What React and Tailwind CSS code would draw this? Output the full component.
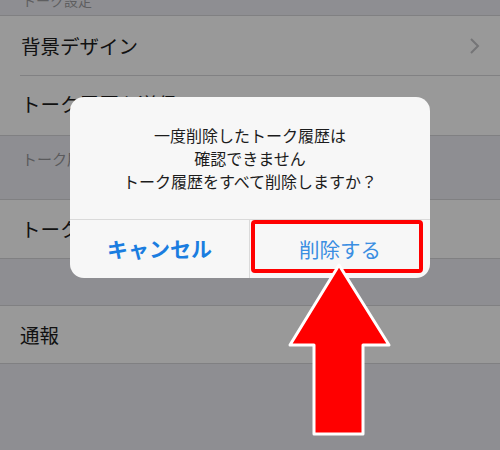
export default function App() {
  const font = { fontFamily: '"Noto Sans CJK JP", "Noto Sans", sans-serif' };
  return (
    <div className="relative w-[500px] h-[450px] overflow-hidden bg-[#8e8e92] text-[#111]" style={font}>
      {/* settings list (dimmed) */}
      <div className="flex flex-col">
        <div className="h-[15px] overflow-hidden px-[22px]">
          <div className="text-[14px] leading-[14px] -mt-[7px] text-[#5e5e60]">トーク設定</div>
        </div>
        <div className="bg-[#999999] border-t border-b border-[#808082]">
          <div className="h-[59px] flex items-center pl-[21px] pr-[20px] justify-between">
            <span className="text-[19.5px]">背景デザイン</span>
            <svg width="11" height="18" viewBox="0 0 11 18">
              <path d="M2 2 L9 9 L2 16" fill="none" stroke="#757577" strokeWidth="2" />
            </svg>
          </div>
          <div className="ml-[20px] h-px bg-[#818183]" />
          <div className="h-[59px] flex items-center pl-[21px] pb-[3px]">
            <span className="text-[19.5px]">トーク履歴を送信</span>
          </div>
        </div>
        <div className="h-[63px] px-[22px] pt-[10px]">
          <span className="text-[15px] text-[#5a5a5c]">トーク履歴をメールで送信します</span>
        </div>
        <div className="bg-[#999999] border-t border-b border-[#808082]">
          <div className="h-[58px] flex items-center pl-[21px]">
            <span className="text-[19.5px]">トーク履歴をすべて削除</span>
          </div>
        </div>
        <div className="h-[46px]" />
        <div className="bg-[#999999] border-t border-b border-[#808082]">
          <div className="h-[57px] flex items-center pl-[20px]">
            <span className="text-[19.5px]">通報</span>
          </div>
        </div>
      </div>

      {/* alert dialog */}
      <div className="absolute left-[70px] top-[97px] w-[360px] h-[181px] rounded-[14px] bg-[#f7f7f7] flex flex-col overflow-hidden">
        <div className="flex-1 flex flex-col items-center justify-center text-[16px] leading-[23px] text-[#1c1c1c] pt-[1px]">
          <div>一度削除したトーク履歴は</div>
          <div>確認できません</div>
          <div>トーク履歴をすべて削除しますか？</div>
        </div>
        <div className="h-[59px] border-t border-[#dadada] flex">
          <div className="w-[180px] flex items-center justify-center text-[21px] font-bold text-[#1a7de0] border-r border-[#dadada]">
            キャンセル
          </div>
          <div className="flex-1 flex items-center justify-center text-[20.5px] text-[#3a8ee2]">
            削除する
          </div>
        </div>
      </div>

      {/* red highlight box */}
      <div className="absolute left-[251px] top-[220px] w-[172px] h-[53px] border-[4px] border-[#ff0000] rounded-[4px]" />

      {/* arrow */}
      <svg className="absolute left-0 top-0" width="500" height="450" viewBox="0 0 500 450">
        <polygon
          points="339,265 389,345 363,345 363,434 314,434 314,345 290,345"
          fill="#ff0000"
          stroke="#ffffff"
          strokeWidth="3"
          strokeLinejoin="round"
        />
      </svg>
    </div>
  );
}
